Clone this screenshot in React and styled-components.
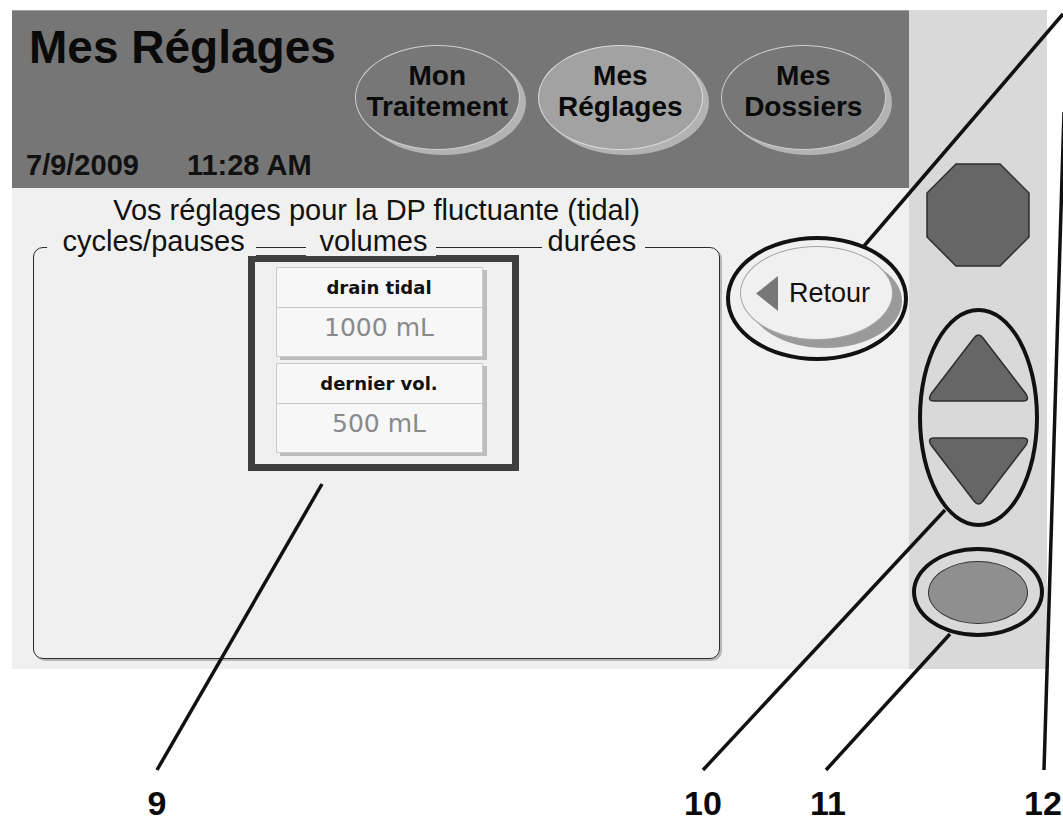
import React from "react";
import styled, { createGlobalStyle } from "styled-components";

const GlobalStyle = createGlobalStyle`
  html, body {
    margin: 0;
    padding: 0;
    background: #fff;
  }
  body {
    width: 1063px;
    height: 821px;
    overflow: hidden;
    font-family: "Liberation Sans", Arial, sans-serif;
    color: #111;
  }
`;

const Page = styled.div`
  position: relative;
  width: 1063px;
  height: 821px;
  padding: 10px 0 0 12px;
  box-sizing: border-box;
  overflow: hidden;
`;

const Device = styled.div`
  display: flex;
  width: 1035px;
  height: 659px;
`;

const Screen = styled.div`
  width: 897px;
  display: flex;
  flex-direction: column;
`;

const Header = styled.header`
  height: 178px;
  box-sizing: border-box;
  background: #767676;
  border-top: 1px solid #a3a3a3;
  padding: 13px 0 0 14px;
`;

const TopRow = styled.div`
  display: flex;
  align-items: flex-start;
`;

const Title = styled.h1`
  margin: 0 0 0 3px;
  font-size: 46px;
  line-height: 46px;
  font-weight: bold;
  color: #0a0a0a;
  white-space: nowrap;
`;

const Tabs = styled.nav`
  display: flex;
  gap: 18px;
  margin: 21px 0 0 19px;
`;

const Tab = styled.div`
  width: 165px;
  height: 105px;
  box-sizing: border-box;
  border-radius: 50%;
  border: 1px solid ${(p) => (p.$active ? "#dadada" : "#d0d0d0")};
  background: ${(p) => (p.$active ? "#a2a2a2" : "#777")};
  box-shadow: 6px 5px 0 #b3b3b3;
  display: flex;
  flex-direction: column;
  align-items: center;
  justify-content: center;
  padding-bottom: 13px;
  font-size: 28px;
  line-height: 31px;
  font-weight: bold;
  text-align: center;
  color: #0a0a0a;
`;

const DateRow = styled.div`
  display: flex;
  margin-top: 1px;
  font-size: 29px;
  line-height: 29px;
  font-weight: bold;
  color: #111;
`;

const Stamp = styled.span`
  margin-left: ${(p) => p.$gap || 0}px;
`;

const Content = styled.main`
  flex: 1;
  background: #f0f0f0;
  display: flex;
  padding-left: 21px;
`;

const MainCol = styled.div`
  width: 687px;
  display: flex;
  flex-direction: column;
`;

const Intro = styled.p`
  margin: 8px 0 0;
  text-align: center;
  font-size: 29px;
  line-height: 29px;
  white-space: nowrap;
`;

const Frame = styled.section`
  margin-top: 22px;
  height: 412px;
  box-sizing: border-box;
  border: 1.5px solid #2b2b2b;
  border-radius: 10px;
  box-shadow: 2px 2px 0 #b8b8b8;
`;

const LegendRow = styled.div`
  display: flex;
  margin-top: -21px;
  height: 29px;
`;

const Legend = styled.span`
  width: ${(p) => p.$w}px;
  margin-left: ${(p) => p.$ml}px;
  padding-left: ${(p) => p.$pl}px;
  box-sizing: border-box;
  background: #f0f0f0;
  font-size: 29px;
  line-height: 29px;
  white-space: nowrap;
`;

const VolumeGroup = styled.div`
  margin: -1.5px 0 0 213.5px;
  width: 271px;
  height: 216px;
  box-sizing: border-box;
  border: 7px solid #3f3f3f;
  padding: 5px 0 0 21px;
  display: flex;
  flex-direction: column;
  gap: 6px;
`;

const Setting = styled.div`
  width: 207px;
  height: 90px;
  box-sizing: border-box;
  background: #f7f7f7;
  border: 1px solid #cacaca;
  box-shadow: 4px 3px 0 #bdbdbd;
  display: flex;
  flex-direction: column;
`;

const SettingName = styled.div`
  height: 39px;
  border-bottom: 1px solid #c4c4c4;
  display: flex;
  align-items: center;
  justify-content: center;
  font-family: "DejaVu Sans", sans-serif;
  font-weight: bold;
  font-size: 18px;
  color: #111;
`;

const SettingValue = styled.div`
  flex: 1;
  display: flex;
  align-items: center;
  justify-content: center;
  padding-bottom: 8px;
  font-family: "DejaVu Sans", sans-serif;
  font-size: 25px;
  color: #8a8a8a;
`;

const SideCol = styled.div`
  margin-left: 6px;
  padding-top: 48px;
`;

const Ring = styled.div`
  width: ${(p) => p.$w}px;
  height: ${(p) => p.$h}px;
  box-sizing: border-box;
  border: 4px solid #111;
  border-radius: 50%;
`;

const RetourRing = styled(Ring)`
  padding: 6px 0 0 10px;
`;

const RetourButton = styled.button`
  width: 153px;
  height: 94px;
  box-sizing: border-box;
  border-radius: 50%;
  background: #f0f0f0;
  border: 1px solid #a5a5a5;
  box-shadow: 9px 8px 0 #9a9a9a;
  display: flex;
  align-items: center;
  gap: 11px;
  padding: 0 0 0 15px;
  font-family: "Liberation Sans", Arial, sans-serif;
  font-size: 27px;
  color: #111;
`;

const Panel = styled.aside`
  width: 138px;
  background: #d9d9d9;
  display: flex;
  flex-direction: column;
  align-items: center;
  padding-top: 153px;
  box-sizing: border-box;
`;

const ArrowRing = styled(Ring)`
  margin-top: 41px;
  display: flex;
  flex-direction: column;
  align-items: center;
  padding-top: 21px;
  gap: 35px;
`;

const OkRing = styled(Ring)`
  margin-top: 20px;
  display: flex;
  align-items: center;
  justify-content: center;
`;

const OkButton = styled.div`
  width: 100px;
  height: 63px;
  box-sizing: border-box;
  border-radius: 50%;
  background: #8f8f8f;
  border: 1.5px solid #333;
`;

const Callouts = styled.svg`
  position: absolute;
  left: 0;
  top: 0;
  pointer-events: none;
`;

const Number = styled.span`
  position: absolute;
  top: 786px;
  left: ${(p) => p.$x}px;
  transform: translateX(-50%);
  font-size: 34px;
  line-height: 34px;
  font-weight: bold;
  color: #0a0a0a;
`;

// callout lines: x1, y1, x2, y2
const lines = [
  [864, 246, 1063, 14],
  [1064, 112, 1044, 770],
  [322, 484, 157, 770],
  [945, 510, 703, 770],
  [950, 634, 826, 770],
];

const Octagon = () => (
  <svg width="104" height="104" viewBox="0 0 104 104">
    <polygon
      points="30,1 74,1 103,30 103,74 74,103 30,103 1,74 1,30"
      fill="#666"
      stroke="#2e2e2e"
      strokeWidth="1.5"
    />
  </svg>
);

const Arrow = ({ down }) => (
  <svg width="101" height="69" viewBox="0 0 101 69">
    <path
      d={
        down
          ? "M46 64 Q50.5 70 55 64 L98 8 Q102 1 95 1 L6 1 Q-1 1 3 8 Z"
          : "M46 5 Q50.5 -1 55 5 L98 61 Q102 68 95 68 L6 68 Q-1 68 3 61 Z"
      }
      fill="#666"
      stroke="#2e2e2e"
      strokeWidth="1.5"
    />
  </svg>
);

export default function App() {
  return (
    <>
      <GlobalStyle />
      <Page>
        <Device>
          <Screen>
            <Header>
              <TopRow>
                <Title>Mes Réglages</Title>
                <Tabs>
                  <Tab>
                    <span>Mon</span>
                    <span>Traitement</span>
                  </Tab>
                  <Tab $active>
                    <span>Mes</span>
                    <span>Réglages</span>
                  </Tab>
                  <Tab>
                    <span>Mes</span>
                    <span>Dossiers</span>
                  </Tab>
                </Tabs>
              </TopRow>
              <DateRow>
                <Stamp>7/9/2009</Stamp>
                <Stamp $gap={48}>11:28 AM</Stamp>
              </DateRow>
            </Header>
            <Content>
              <MainCol>
                <Intro>Vos réglages pour la DP fluctuante (tidal)</Intro>
                <Frame>
                  <LegendRow>
                    <Legend $w={209} $ml={12.5} $pl={16}>cycles/pauses</Legend>
                    <Legend $w={130} $ml={50} $pl={14}>volumes</Legend>
                    <Legend $w={103} $ml={106} $pl={6}>durées</Legend>
                  </LegendRow>
                  <VolumeGroup>
                    <Setting>
                      <SettingName>drain tidal</SettingName>
                      <SettingValue>1000 mL</SettingValue>
                    </Setting>
                    <Setting>
                      <SettingName>dernier vol.</SettingName>
                      <SettingValue>500 mL</SettingValue>
                    </Setting>
                  </VolumeGroup>
                </Frame>
              </MainCol>
              <SideCol>
                <RetourRing $w={182} $h={125}>
                  <RetourButton>
                    <svg width="22" height="35" viewBox="0 0 22 35">
                      <polygon points="0,17.5 22,0 22,35" fill="#777" />
                    </svg>
                    Retour
                  </RetourButton>
                </RetourRing>
              </SideCol>
            </Content>
          </Screen>
          <Panel>
            <Octagon />
            <ArrowRing $w={121} $h={219}>
              <Arrow />
              <Arrow down />
            </ArrowRing>
            <OkRing $w={132} $h={90}>
              <OkButton />
            </OkRing>
          </Panel>
        </Device>
        <Callouts width="1063" height="821" viewBox="0 0 1063 821">
          {lines.map(([x1, y1, x2, y2], i) => (
            <line
              key={i}
              x1={x1}
              y1={y1}
              x2={x2}
              y2={y2}
              stroke="#111"
              strokeWidth="3.5"
            />
          ))}
        </Callouts>
        <Number $x={157}>9</Number>
        <Number $x={703}>10</Number>
        <Number $x={828}>11</Number>
        <Number $x={1043}>12</Number>
      </Page>
    </>
  );
}
